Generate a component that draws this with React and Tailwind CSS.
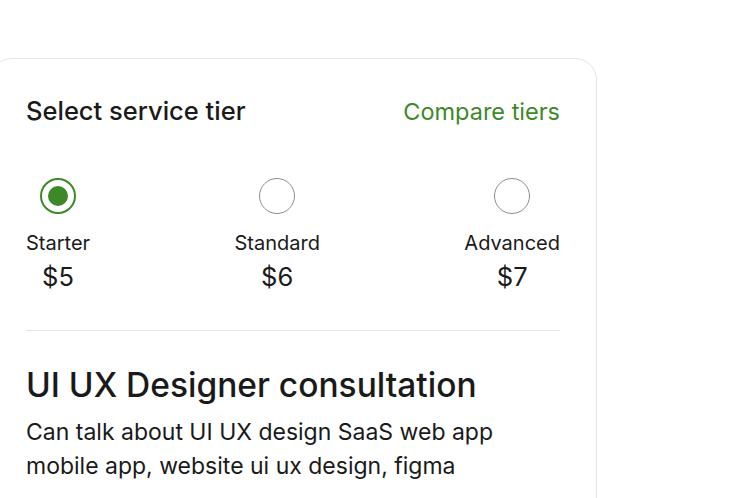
import React from "react";

function Radio({ checked }) {
  if (checked) {
    return (
      <div className="w-[36px] h-[36px] rounded-full border-[2px] border-[#3c8a27] flex items-center justify-center">
        <div className="w-[20px] h-[20px] rounded-full bg-[#3c8a27]" />
      </div>
    );
  }
  return <div className="w-[36px] h-[36px] rounded-full border border-[#8c8c8c]" />;
}

function Tier({ name, price, checked }) {
  return (
    <div className="flex flex-col items-center">
      <Radio checked={checked} />
      <div className="mt-[17px] text-[20px] leading-[24px] text-[#1a1a1a]">{name}</div>
      <div className="mt-[7px] text-[25.5px] leading-[30px] text-[#1a1a1a]">{price}</div>
    </div>
  );
}

export default function App() {
  return (
    <div
      className="w-[732px] h-[498px] overflow-hidden bg-white"
      style={{ fontFamily: 'Inter, "Liberation Sans", Arial, sans-serif' }}
    >
      <div className="mt-[58px] ml-[-10px] w-[607px] h-[480px] rounded-[22px] border border-[#e4e4e4] pl-[35px] pr-[36px] pt-[37px]">
        <div className="flex items-baseline justify-between">
          <div className="text-[25.5px] leading-[30px] font-medium text-[#1a1a1a]">Select service tier</div>
          <div className="text-[23.5px] leading-[30px] text-[#3c8a27]">Compare tiers</div>
        </div>
        <div className="mt-[51px] flex justify-between">
          <Tier name="Starter" price="$5" checked />
          <Tier name="Standard" price="$6" />
          <Tier name="Advanced" price="$7" />
        </div>
        <div className="mt-[38px] h-px bg-[#e4e4e4]" />
        <div className="mt-[34px] text-[33.5px] leading-[40px] font-medium text-[#1a1a1a]">
          UI UX Designer consultation
        </div>
        <div className="mt-[10px] text-[23px] leading-[34px] text-[#1a1a1a]">
          Can talk about UI UX design SaaS web app
          <br />
          mobile app, website ui ux design, figma
        </div>
      </div>
    </div>
  );
}
